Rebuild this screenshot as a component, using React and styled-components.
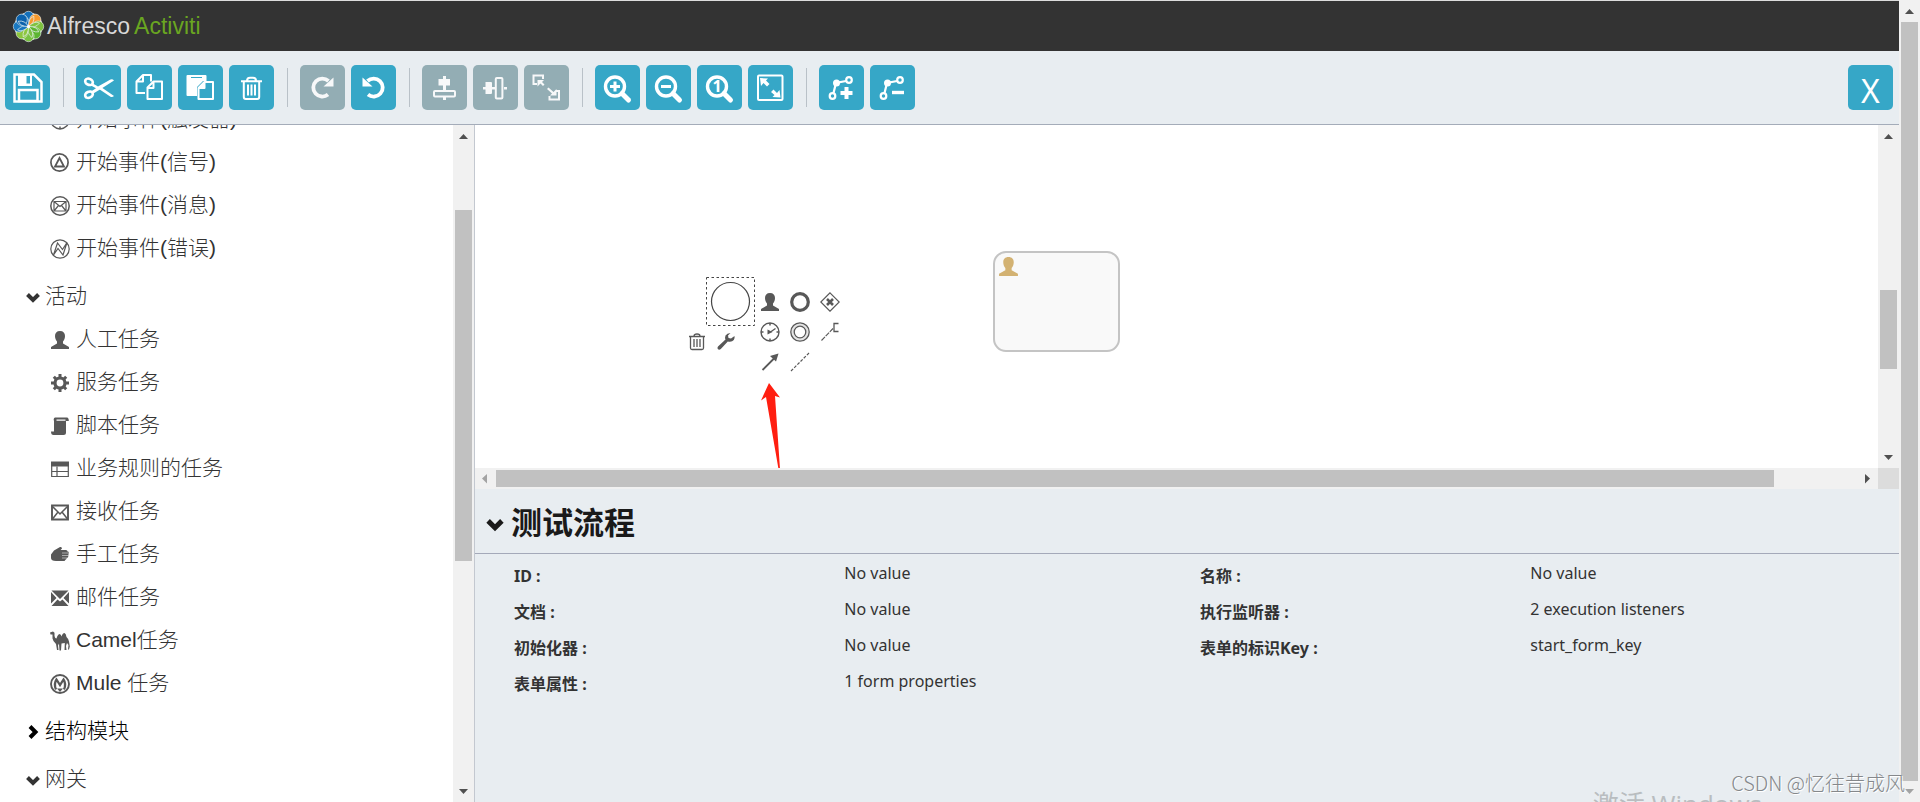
import styled, { createGlobalStyle, css } from 'styled-components'

const GlobalStyle = createGlobalStyle`
  *{
    box-sizing: border-box;
  }
  body{
    margin: 0;
    background: #fff;
    color: #333;
    font-family: "Liberation Sans", "Noto Sans CJK SC", sans-serif;
  }
  button{
    font: inherit;
    color: inherit;
    padding: 0;
    border: 0;
    background: none;
    cursor: pointer;
  }
`

const ui = '"Noto Sans CJK SC", sans-serif'

/* ---------- page ---------- */

const Page = styled.div`
  display: flex;
  height: 100vh;
  position: relative;
  overflow: hidden;
`

const Editor = styled.div`
  flex: 1;
  min-width: 0;
  display: flex;
  flex-direction: column;
`

const Header = styled.header`
  display: flex;
  align-items: center;
  gap: 2px;
  height: 51px;
  padding-left: 12px;
  background: #333;
  border-top: 1px solid #ddd;
`

const Brand = styled.a`
  display: flex;
  gap: 4px;
  font: 300 23px/32px "Liberation Sans", sans-serif;
  color: #d8d8d8;
  text-decoration: none;
  .product{
    color: #6aa621;
  }
`

const Workspace = styled.div`
  flex: 1;
  min-height: 0;
  display: flex;
`

/* ---------- toolbar ---------- */

const ToolbarStyled = styled.div`
  display: flex;
  justify-content: space-between;
  align-items: center;
  height: 74px;
  padding: 0 6px 0 5px;
  background: #e8edf1;
  border-bottom: 1px solid #a4acb9;
`

const Tools = styled.div`
  display: flex;
  align-items: center;
`

const ToolGroup = styled.div`
  display: flex;
  gap: 6px;
  & + &{
    margin-left: 13px;
    padding-left: 12px;
    border-left: 1px solid #b9c1c8;
    border-image: linear-gradient(transparent 4px, #b9c1c8 4px 41px, transparent 41px) 1;
  }
`

const ToolButton = styled.button`
  width: 45px;
  height: 45px;
  border-radius: 5px;
  background: #36a7c7;
  color: #fff;
  svg{
    display: block;
  }
  &:disabled{
    background: #93adb4;
    color: #f7f8f9;
    cursor: default;
  }
`

const CloseButton = styled(ToolButton)`
  padding-top: 6px;
  font: 32px/39px "Noto Sans", sans-serif;
`

/* ---------- scroll bars ---------- */

const ScrollStyled = styled.div`
  display: flex;
  flex-shrink: 0;
  background: #f1f1f1;
  ${({horizontal}) => horizontal ? css`
    height: 21px;
    .thumb{ margin: 2px 0; }
  ` : css`
    flex-direction: column;
    width: 21px;
    .thumb{ margin: 0 2px; }
  `}
  .thumb{
    background: #c1c1c1;
  }
  svg{
    flex-shrink: 0;
  }
`

const Portion = styled.div`
  flex: ${({size}) => size} 1 0;
`

const arrows = {
  up: 'M6 14l4.5-5 4.5 5z',
  down: 'M6 8l4.5 5 4.5-5z',
  left: 'M12 6l-5 4.5 5 5z',
  right: 'M8 6l5 4.5-5 5z',
}

function Arrow({dir, muted}) {
  return (
    <svg width='21' height='21' viewBox='0 0 21 21' aria-hidden='true'>
      <path d={arrows[dir]} fill={muted ? '#a3a3a3' : '#505050'} />
    </svg>
  )
}

function ScrollBar({horizontal, before, thumb, after, mutedStart, mutedEnd}) {
  return (
    <ScrollStyled horizontal={horizontal} aria-hidden='true'>
      <Arrow dir={horizontal ? 'left' : 'up'} muted={mutedStart} />
      <Portion size={before} />
      <Portion size={thumb} className='thumb' />
      <Portion size={after} />
      <Arrow dir={horizontal ? 'right' : 'down'} muted={mutedEnd} />
    </ScrollStyled>
  )
}

/* ---------- palette ---------- */

const Palette = styled.nav`
  display: flex;
  width: 475px;
  flex-shrink: 0;
  border-right: 1px solid #c3c8d0;
`

const PaletteView = styled.div`
  flex: 1;
  overflow: hidden;
`

const PaletteList = styled.div`
  margin-top: -28px;
  font-size: 21px;
  line-height: 43px;
  font-weight: 300;
`

const Section = styled.button`
  display: flex;
  align-items: center;
  gap: 4px;
  width: 100%;
  margin-top: 5px;
  padding-left: 25px;
  text-align: left;
  color: ${({closed}) => closed ? '#000' : '#333'};
  svg{
    margin-top: 3px;
  }
`

const Stencils = styled.ul`
  margin: 0;
  padding: 0;
  list-style: none;
`

const Stencil = styled.li`
  display: flex;
  align-items: center;
  gap: 6px;
  padding-left: 50px;
  color: #333;
  svg{
    margin-top: 3px;
    color: #585858;
  }
`

/* ---------- canvas ---------- */

const Main = styled.main`
  flex: 1;
  min-width: 0;
  display: flex;
  flex-direction: column;
`

const CanvasPane = styled.section`
  flex: 1;
  min-height: 0;
  display: grid;
  grid-template-columns: 1fr 21px;
  grid-template-rows: 1fr 21px;
`

const Canvas = styled.div`
  position: relative;
  overflow: hidden;
  background: #fff;
`

const Corner = styled.div`
  background: #dcdcdc;
`

const Node = styled.div`
  position: absolute;
  left: ${({x}) => x}px;
  top: ${({y}) => y}px;
  svg{
    display: block;
  }
`

const UserTask = styled(Node)`
  width: 127px;
  height: 101px;
  padding: 3px;
  border: 2px solid #c4c4c4;
  border-radius: 13px;
  background: #f9f9f9;
  color: #d3b272;
`

const MorphButton = styled(Node).attrs({as: 'button'})`
  width: 20px;
  height: 20px;
  color: #585858;
`

/* ---------- properties ---------- */

const Properties = styled.section`
  min-height: 313px;
  background: #e8edf1;
  font-family: ${ui};
`

const PropertiesTitle = styled.h2`
  margin: 0;
  height: 65px;
  border-bottom: 1px solid #a4a9b9;
  color: #1a1a1a;
  button{
    display: flex;
    align-items: center;
    gap: 6px;
    padding: 9px 0 0 10px;
    font: 700 31px/46px ${ui};
  }
  svg{
    margin-top: 5px;
  }
`

const PropertyList = styled.dl`
  display: grid;
  grid-template-columns: 1fr 1fr;
  margin: 0;
  padding: 1px 13px 0 39px;
`

const Property = styled.div`
  display: grid;
  grid-template-columns: 13fr 14fr;
  height: 36px;
  dt{
    padding-top: 3px;
    font: 700 16px/36px "Noto Sans", ${ui};
  }
  dd{
    margin: 0;
    font: 400 16px/36px "Noto Sans", ${ui};
  }
`

/* ---------- watermarks ---------- */

const Credit = styled.div`
  position: absolute;
  right: 15px;
  bottom: 4px;
  font: 300 20px/30px ${ui};
  color: #85888b;
  text-shadow: 1px 1px 0 #fff;
`

const Activate = styled.div`
  position: absolute;
  right: 158px;
  bottom: -20px;
  font: 400 26px/36px "Open Sans", ${ui};
  color: #b9bdc0;
`

/* ---------- icons ---------- */

const toolIcons = {
  save: (
    <>
      <path d='M9.5 9.5H29l7.5 7.5v19.500h-27z' fill='none' stroke='currentColor' strokeWidth='2.5' />
      <path d='M13 9h14v12H13zM21.5 11v7.5h3.5V11z' fill='currentColor' fillRule='evenodd' />
      <path d='M14 36V25h18.5v11z' fill='none' stroke='currentColor' strokeWidth='2.5' />
    </>
  ),
  cut: (
    <>
      <ellipse cx='13' cy='16.8' rx='4' ry='3' transform='rotate(25 13 16.8)' fill='none' stroke='currentColor' strokeWidth='2.6' />
      <ellipse cx='13' cy='29.7' rx='4' ry='3' transform='rotate(-25 13 29.7)' fill='none' stroke='currentColor' strokeWidth='2.6' />
      <path d='M16 18l6 3.5 12.5-7q2-.8 3.5.9L24 24.5 16.5 29 15 26.5l5-3.3-5.5-3z' fill='currentColor' />
      <path d='M20 22l14.5 9.800q2 .8 3.5-.9L25 22z' fill='currentColor' />
    </>
  ),
  copy: (
    <g fill='none' stroke='currentColor' strokeWidth='2' strokeLinejoin='round'>
      <path d='M18 28H9.5V16.5L16 10h8v6.5M16 10v6.5H9.5' />
      <path d='M26.5 16.5H35V34H20.5V22.5zM26.5 16.5V23h-6' />
    </g>
  ),
  paste: (
    <>
      <path d='M9.5 10h18q1 0 1 1v5H25l-6 6v9H9.5q-1 0-1-1V11q0-1 1-1zM13 12v1h11v-1z' fill='currentColor' fillRule='evenodd' />
      <path d='M26.5 17H35v17H20.5V23zM26.5 17v6h-6' fill='none' stroke='currentColor' strokeWidth='2' strokeLinejoin='round' />
      <path d='M26 17l-6 6h6z' fill='currentColor' />
    </>
  ),
  trash: (
    <g fill='none' stroke='currentColor' strokeWidth='2'>
      <path d='M12 16.3h21M18 16q0-3.3 3-3.3h3q3 0 3 3.3M14.8 17v15q0 2 2 2h11.4q2 0 2-2V17' />
      <path d='M19 19.5v11M22.5 19.5v11M26 19.5v11' />
    </g>
  ),
  redo: (
    <>
      <path d='M28.5 16a9 9 0 1 0-.5 13.5' fill='none' stroke='currentColor' strokeWidth='3.8' />
      <path d='M33.5 12.5v9h-10z' fill='currentColor' />
    </>
  ),
  undo: (
    <>
      <path d='M16.5 16a9 9 0 1 1 .5 13.5' fill='none' stroke='currentColor' strokeWidth='3.8' />
      <path d='M11.5 12.5v9h10z' fill='currentColor' />
    </>
  ),
  alignV: (
    <>
      <path d='M21 11h3v3h4v6.5h-4V25h-3v-4.5h-4.5V14H21zM21 32h3v3h-3z' fill='currentColor' />
      <rect x='12' y='26' width='21' height='5.5' rx='1' fill='none' stroke='currentColor' strokeWidth='2' />
    </>
  ),
  alignH: (
    <>
      <path d='M10 22h2.500v-5H18q1 0 1 1v4h3v2.500h-3V28q0 1-1 1h-5.500v-4.500H10zM31 22h3v2.500h-3z' fill='currentColor' />
      <rect x='22.8' y='13' width='6.6' height='20.5' rx='1' fill='none' stroke='currentColor' strokeWidth='2' />
    </>
  ),
  sameSize: (
    <>
      <path d='M13 19H9.5v-8.5H19V14M25.5 31v3.5H35V26h-3' fill='none' stroke='currentColor' strokeWidth='2' />
      <path d='M13.5 15H20l-2 2 2.5 2.5L19 21l-2.500-2.500-3 3zM32.500 30.500H26l2-2-5-4.500 1.500-1.500 5 4.500 3-3z' fill='currentColor' />
    </>
  ),
  zoomIn: <path d='M15 21.5h10M20 16.5v10' stroke='currentColor' strokeWidth='3' />,
  zoomOut: <path d='M15 21.5h10' stroke='currentColor' strokeWidth='3' />,
  zoomActual: (
    <text x='20' y='27' textAnchor='middle' fill='currentColor' fontSize='16' fontWeight='700' fontFamily='Open Sans'>1</text>
  ),
  zoomFit: (
    <>
      <rect x='10' y='10.5' width='24.5' height='24.5' rx='1' fill='none' stroke='currentColor' strokeWidth='2' />
      <path d='M12 13l8 .5-2 2 3.5 3.5-2.5 2.5-3.5-3.5L13 21zM32.5 32.5l-8-.5 2-2-3.5-3 2.5-2.5 3.5 3.5 2.5-3z' fill='currentColor' />
    </>
  ),
}

const zoomGlass = (
  <>
    <circle cx='20' cy='21.5' r='9.5' fill='none' stroke='currentColor' strokeWidth='3.4' />
    <path d='M27 28.5l6.5 6.5' stroke='currentColor' strokeWidth='5' strokeLinecap='round' />
  </>
)

const bendLine = (
  <>
    <g fill='none' stroke='currentColor' strokeWidth='2.2'>
      <circle cx='13.5' cy='31' r='2.8' />
      <circle cx='30' cy='15' r='2.8' />
      <path d='M14.5 28L17 18l10-2' />
    </g>
    <circle cx='17.5' cy='18' r='3.5' fill='currentColor' />
  </>
)

toolIcons.bendAdd = <path d='M21.5 28h12M27.5 22v12' stroke='currentColor' strokeWidth='4' />
toolIcons.bendRemove = <path d='M22 27.5h12' stroke='currentColor' strokeWidth='3.4' />

function ToolIcon({name}) {
  return (
    <svg width='45' height='45' viewBox='0 0 45 45' aria-hidden='true'>
      {['zoomIn', 'zoomOut', 'zoomActual'].includes(name) && zoomGlass}
      {name.startsWith('bend') && bendLine}
      {toolIcons[name]}
    </svg>
  )
}

const line = {fill: 'none', stroke: 'currentColor', strokeWidth: 1.5}

const icons = {
  timer: (
    <>
      <circle cx='10' cy='10' r='9' {...line} strokeWidth='1.4' />
      <path d='M10 1v2.5M10 16.5V19M1 10h2.5M16.5 10H19' {...line} />
      <path d='M10.5 10l5-3.5' {...line} strokeWidth='1.3' />
      <path d='M7.5 7.5l5 2.5-5 2.5z' fill='currentColor' />
    </>
  ),
  signal: (
    <>
      <circle cx='9.5' cy='9.5' r='8.6' {...line} strokeWidth='1.7' />
      <path d='M9.5 5l4.5 8.5H5z' {...line} strokeWidth='1.8' />
    </>
  ),
  message: (
    <>
      <circle cx='10' cy='10' r='9.2' {...line} />
      <path d='M4 5.5h12V15H4zM4 5.5l6 5 6-5M4 15l4.5-5.5M16 15l-4.5-5.5' {...line} strokeWidth='1.2' />
    </>
  ),
  error: (
    <>
      <circle cx='10' cy='10' r='9.2' {...line} strokeWidth='1.2' />
      <path d='M3.5 16l4-12 5 6.5 4.5-7L13 16 8 9.5z' {...line} strokeWidth='1.2' />
    </>
  ),
  user: (
    <path d='M10 1c3.3 0 5 2 5 5 0 2.5-1 4.5-2 5.5v2l6 3.5v2H1v-2l6-3.5v-2C6 10.5 5 8.5 5 6c0-3 1.7-5 5-5z' fill='currentColor' />
  ),
  gear: (
    <>
      <circle cx='10' cy='10' r='5' fill='none' stroke='currentColor' strokeWidth='3.2' />
      <path d='M10 1v4M10 15v4M1 10h4M15 10h4M3.8 3.8l2.5 2.5M13.7 13.7l2.5 2.5M16.2 3.8l-2.5 2.5M6.3 13.7l-2.5 2.5' stroke='currentColor' strokeWidth='3' />
    </>
  ),
  script: (
    <path d='M5 1.5h12q1.8.3 1.8 3.5H16v11.5q0 2.5-2.5 2.5h-10Q1 19 1 15.5h3V5q-1-2.5 1-3.5zM6.5 3.5v1.3h9V3.5z' fill='currentColor' fillRule='evenodd' />
  ),
  rule: (
    <>
      <path d='M1 2.5h18v5H1z' fill='currentColor' />
      <path d='M1.7 7v10.5h16.6V7M1.7 12.5h16.6M7 7.5v10' {...line} strokeWidth='1.2' />
    </>
  ),
  receive: (
    <>
      <path d='M2 3.5h16v14H2z' fill='none' stroke='currentColor' strokeWidth='1.9' />
      <path d='M2 4l8 8 8-8M2.5 17L8 10M17.5 17L12 10' {...line} />
    </>
  ),
  hand: (
    <>
      <path d='M1 9.5l3-4L10 2q2-.5 2 1.500L10.500 5H16q1.500.2 1.500 1.500h.8q1 1.500 0 2.500.7 1 0 2.300 0 1.500-1.500 1.800 0 1.400-1.300 1.600L14.500 16H6q-5 0-5-3z' fill='currentColor' />
      <path d='M12 8h6M12 10.5h7M12 13h5.5' stroke='#fff' strokeWidth='.5' />
    </>
  ),
  mail: (
    <path d='M1.5 2.5h17L10 11zM1 4l5.5 6L1 15.5zM19 4v11.500L13.500 10zM1.500 18l6-6.500L10 13.500l2.500-2 6 6.500z' fill='currentColor' />
  ),
  camel: (
    <path d='M0 1.500l3-1 1.500 1.200V5q.5 2.500 2 2.500 1-4 3-4.500 1.500 0 2 2.500 1-3.500 3-3.500 1.500.5 2 4 2 1.500 2.500 4.500l.8 5-.8 3h-1l.5-4.500-1.500-2-1 3 .5 4H14.500l.3-7-3.300.5-.5 7H9.500L9 12.500l-1 2 .5 4.500H7L6 13q-3-2.500-3.500-5.500V3.500H.5z' fill='currentColor' />
  ),
  mule: (
    <>
      <circle cx='10' cy='10' r='9' fill='none' stroke='currentColor' strokeWidth='1.9' />
      <path d='M6 15.5Q3.5 10 6.5 5.5L10 11l3.5-5.5Q16.5 10 14 15.5' fill='none' stroke='currentColor' strokeWidth='2.3' />
      <path d='M7 14.5l3 3.5 3-3.5z' fill='currentColor' />
    </>
  ),
  end: <circle cx='10' cy='10' r='8.3' fill='none' stroke='currentColor' strokeWidth='3.2' />,
  gateway: (
    <>
      <path d='M10 .8l9.200 9.200-9.200 9.200L.8 10z' {...line} strokeWidth='1.2' />
      <path d='M7 7l6 6M13 7l-6 6' stroke='currentColor' strokeWidth='2.6' />
    </>
  ),
  catching: (
    <>
      <circle cx='10' cy='10' r='7.5' fill='none' stroke='#e4e4e4' strokeWidth='2.5' />
      <circle cx='10' cy='10' r='9.2' {...line} strokeWidth='1.3' />
      <circle cx='10' cy='10' r='5.8' {...line} strokeWidth='1.3' />
    </>
  ),
  annotation: (
    <>
      <path d='M1.5 18.5L13 6.5' {...line} strokeWidth='1.1' strokeDasharray='5 1' />
      <path d='M18.5 1.5H14v8h4.5' {...line} strokeWidth='1.3' />
    </>
  ),
  flow: (
    <>
      <path d='M2.5 18L14 6.5' {...line} strokeWidth='1.8' />
      <path d='M18.5 1.5l-2.5 8-6-5.5z' fill='currentColor' />
    </>
  ),
  association: <path d='M1 19L19 1' {...line} strokeDasharray='3 1.5' strokeWidth='1.2' />,
  bin: (
    <g {...line} strokeWidth='1.3'>
      <path d='M2 4.5h16M7 4q0-2 3-2t3 2M3.5 5v11q0 1.5 1.5 1.5h10q1.5 0 1.5-1.5V5' />
      <path d='M7 7v8M10 7v8M13 7v8' />
    </g>
  ),
  wrench: (
    <path d='M14.5 2q-3.5 0-5 2.5-.8 2 0 4L2 15.500Q.8 17 2 18.300q1.300 1 2.800-.3l7-7.500q4 1 6-1.500 1.200-2 .7-4l-3.500 2.500-2.500-.5-.5-2.500z' fill='currentColor' />
  ),
}

function Icon({name, size = 20}) {
  return (
    <svg width={size} height={size} viewBox='0 0 20 20' aria-hidden='true'>{icons[name]}</svg>
  )
}

function Chevron({closed, size = 16}) {
  return (
    <svg width={size} height={size} viewBox='0 0 16 16' aria-hidden='true'>
      <path d={closed ? 'M5 2.5L10.5 8 5 13.5' : 'M2.5 5.5L8 11l5.5-5.5'} fill='none' stroke='currentColor' strokeWidth='4' />
    </svg>
  )
}

function Logo() {
  const petals = ['#1470ba', '#f79a2e', '#7fc241', '#5cb531', '#7ac142', '#8dc63f', '#1a78c0', '#0b62ad']
  return (
    <svg width='33' height='33' viewBox='-16.500 -16.500 33 33' aria-hidden='true'>
      <circle r='14' fill='#fff' />
      {petals.map((fill, i) => (
        <g key={fill} transform={`rotate(${i * 45})`}>
          <circle cy='-9.6' r='5.6' fill={fill} stroke='#e8f0f0' strokeWidth='.6' />
          <path d='M0 0Q-6-6-3.500-11Q2-7 0 0z' fill={fill} stroke='#e8f0f0' strokeWidth='.7' />
        </g>
      ))}
      <circle r='1.5' fill='#fff' />
    </svg>
  )
}

/* ---------- data ---------- */

const toolGroups = [
  [['save', '保存']],
  [['cut', '剪切'], ['copy', '复制'], ['paste', '粘贴'], ['trash', '删除']],
  [['redo', '重做', true], ['undo', '撤销']],
  [['alignV', '垂直对齐', true], ['alignH', '水平对齐', true], ['sameSize', '相同大小', true]],
  [['zoomIn', '放大'], ['zoomOut', '缩小'], ['zoomActual', '实际大小'], ['zoomFit', '适应屏幕']],
  [['bendAdd', '添加转折点'], ['bendRemove', '移除转折点']],
]

const startEvents = [
  ['timer', '开始事件(触发器)'],
  ['signal', '开始事件(信号)'],
  ['message', '开始事件(消息)'],
  ['error', '开始事件(错误)'],
]

const activities = [
  ['user', '人工任务'],
  ['gear', '服务任务'],
  ['script', '脚本任务'],
  ['rule', '业务规则的任务'],
  ['receive', '接收任务'],
  ['hand', '手工任务'],
  ['mail', '邮件任务'],
  ['camel', 'Camel任务'],
  ['mule', 'Mule 任务'],
]

const morphs = [
  {icon: 'bin', x: 212, y: 207},
  {icon: 'wrench', x: 241, y: 206},
  {icon: 'user', x: 285, y: 167},
  {icon: 'end', x: 315, y: 167},
  {icon: 'gateway', x: 345, y: 167},
  {icon: 'timer', x: 285, y: 197},
  {icon: 'catching', x: 315, y: 197},
  {icon: 'annotation', x: 345, y: 197},
  {icon: 'flow', x: 285, y: 227},
  {icon: 'association', x: 315, y: 227},
]

const properties = [
  ['ID', 'No value'],
  ['名称', 'No value'],
  ['文档', 'No value'],
  ['执行监听器', '2 execution listeners'],
  ['初始化器', 'No value'],
  ['表单的标识Key', 'start_form_key'],
  ['表单属性', '1 form properties'],
]

function Toolbar() {
  return (
    <ToolbarStyled role='toolbar'>
      <Tools>
        {toolGroups.map((group) => (
          <ToolGroup key={group[0][0]}>
            {group.map(([name, label, disabled]) => (
              <ToolButton key={name} type='button' aria-label={label} disabled={disabled}>
                <ToolIcon name={name} />
              </ToolButton>
            ))}
          </ToolGroup>
        ))}
      </Tools>
      <CloseButton type='button'>X</CloseButton>
    </ToolbarStyled>
  )
}

function StencilList({items}) {
  return (
    <Stencils>
      {items.map(([icon, title]) => (
        <Stencil key={title}>
          <Icon name={icon} />
          <span>{title}</span>
        </Stencil>
      ))}
    </Stencils>
  )
}

function App() {
  return (
    <Page>
      <GlobalStyle />
      <Editor>
        <Header>
          <Logo />
          <Brand href='#'>
            <span>Alfresco</span>
            <span className='product'>Activiti</span>
          </Brand>
        </Header>
        <Toolbar />
        <Workspace>
          <Palette>
            <PaletteView>
              <PaletteList>
                <StencilList items={startEvents} />
                <Section type='button'><Chevron />活动</Section>
                <StencilList items={activities} />
                <Section type='button' closed><Chevron closed />结构模块</Section>
                <Section type='button'><Chevron />网关</Section>
              </PaletteList>
            </PaletteView>
            <ScrollBar before={64} thumb={350} after={220} />
          </Palette>
          <Main>
            <CanvasPane>
              <Canvas>
                <Node x={231} y={152}>
                  <svg width='50' height='50' viewBox='0 0 50 50'>
                    <rect x='.5' y='.5' width='48' height='48' fill='none' stroke='#444' strokeDasharray='2.5 2.5' />
                    <circle cx='24.5' cy='24.5' r='19' fill='#fff' stroke='#444' strokeWidth='1.2' />
                  </svg>
                </Node>
                {morphs.map(({icon, x, y}) => (
                  <MorphButton key={icon} type='button' aria-label={icon} x={x} y={y}>
                    <Icon name={icon} />
                  </MorphButton>
                ))}
                <Node x={285} y={257}>
                  <svg width='22' height='87' viewBox='0 0 22 87'>
                    <path d='M9 1l11 14.500-5-1.500 5 73h-1.500L6 15l-5 3.500z' fill='#ff1e10' />
                  </svg>
                </Node>
                <UserTask x={518} y={126}><Icon name='user' size={21} /></UserTask>
              </Canvas>
              <ScrollBar before={144} thumb={79} after={78} />
              <ScrollBar horizontal before={0} thumb={1278} after={83} mutedStart />
              <Corner />
            </CanvasPane>
            <Properties>
              <PropertiesTitle>
                <button type='button'><Chevron size={20} />测试流程</button>
              </PropertiesTitle>
              <PropertyList>
                {properties.map(([name, value]) => (
                  <Property key={name}>
                    <dt>{name} :</dt>
                    <dd>{value}</dd>
                  </Property>
                ))}
              </PropertyList>
            </Properties>
          </Main>
        </Workspace>
      </Editor>
      <ScrollBar before={1} thumb={759} after={0} mutedEnd />
      <Activate>激活 Windows</Activate>
      <Credit>CSDN @忆往昔成风</Credit>
    </Page>
  )
}

export default App
